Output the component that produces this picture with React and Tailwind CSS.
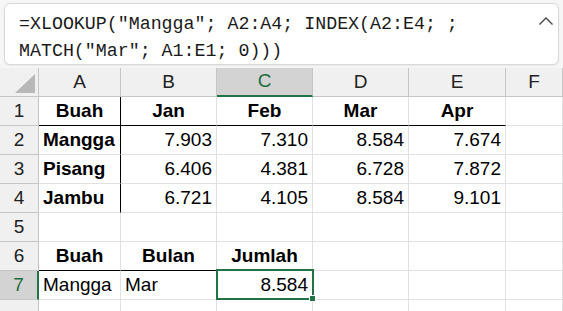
import React from "react";

const cols = ["A", "B", "C", "D", "E", "F"];

// each row: array of [text, align, bold]
const rows = [
  [["Buah", "c", 1], ["Jan", "c", 1], ["Feb", "c", 1], ["Mar", "c", 1], ["Apr", "c", 1]],
  [["Mangga", "l", 1], ["7.903", "r"], ["7.310", "r"], ["8.584", "r"], ["7.674", "r"]],
  [["Pisang", "l", 1], ["6.406", "r"], ["4.381", "r"], ["6.728", "r"], ["7.872", "r"]],
  [["Jambu", "l", 1], ["6.721", "r"], ["4.105", "r"], ["8.584", "r"], ["9.101", "r"]],
  [],
  [["Buah", "c", 1], ["Bulan", "c", 1], ["Jumlah", "c", 1]],
  [["Mangga", "l"], ["Mar", "l"], ["8.584", "r"]],
  [],
];

const alignClass = { l: "justify-start pl-[4px]", c: "justify-center", r: "justify-end pr-[4px]" };

function cellBorders(r, c) {
  // r: 1-based row, c: 0-based col
  const bottomBlack = (r === 1 && c <= 4) || (r === 6 && c <= 2);
  const rightBlack = c === 0 && r >= 1 && r <= 4;
  if (bottomBlack && rightBlack) return "border-r border-b border-r-black border-b-black";
  if (bottomBlack) return "border-r border-b border-r-[#e1e1e1] border-b-black";
  if (rightBlack) return "border-r border-b border-r-black border-b-[#e1e1e1]";
  return "border-r border-b border-[#e1e1e1]";
}

function Cell({ r, c, data }) {
  const [text, align, bold] = data || [];
  const selected = r === 7 && c === 2;
  return (
    <div
      className={`relative h-[29px] flex items-center ${alignClass[align || "l"]} ${cellBorders(r, c)} ${
        bold ? "font-bold" : ""
      } text-[19px] text-black whitespace-nowrap`}
    >
      {text}
      {selected && (
        <div className="absolute z-10 -left-px -top-[2px] -right-[2px] -bottom-px border-2 border-[#217346]">
          <div className="absolute -right-[4px] -bottom-[4px] w-[7px] h-[7px] bg-[#217346] border border-white" />
        </div>
      )}
    </div>
  );
}

export default function App() {
  return (
    <div className="w-[563px] h-[311px] overflow-hidden bg-white" style={{ fontFamily: "'Liberation Sans', Arial, sans-serif" }}>
      <div className="bg-[#f6f6f6] px-[4px] pt-[3px] pb-[3px]">
        <div className="relative h-[62px] rounded-[6px] border border-[#d8d8d8] bg-white pl-[14px] pt-[7px] shadow-[0_1px_2px_rgba(0,0,0,0.06)]">
          <div
            className="text-[18.3px] leading-[27px] text-[#1a1a1a] whitespace-pre"
            style={{ fontFamily: "'Liberation Mono', 'DejaVu Sans Mono', monospace" }}
          >
            {'=XLOOKUP("Mangga"; A2:A4; INDEX(A2:E4; ;\nMATCH("Mar"; A1:E1; 0)))'}
          </div>
          <svg className="absolute right-[4px] top-[12px]" width="16" height="10" viewBox="0 0 16 10">
            <path d="M1.5 8.5 L8 2 L14.5 8.5" fill="none" stroke="#444" strokeWidth="1.3" />
          </svg>
        </div>
      </div>
      <div className="grid grid-cols-[39px_82px_96px_96px_96px_97px_1fr]">
        <div className="h-[29px] bg-[#f0f0f0] border-r border-b border-[#c6c6c6] flex items-end justify-end pr-[3px] pb-[3px]">
          <div className="w-[20px] h-[19px] bg-[#b8b8b8] [clip-path:polygon(100%_0,100%_100%,0_100%)]" />
        </div>
        {cols.map((l) =>
          l === "C" ? (
            <div
              key={l}
              className="h-[29px] bg-[#d3d3d3] border-r border-[#c6c6c6] border-b-2 border-b-[#217346] flex items-center justify-center text-[19px] text-[#1d6b3e]"
            >
              {l}
            </div>
          ) : (
            <div
              key={l}
              className="h-[29px] bg-[#f0f0f0] border-r border-b border-[#c6c6c6] flex items-center justify-center text-[19px] text-[#222]"
            >
              {l}
            </div>
          )
        )}
        {rows.map((row, i) => {
          const r = i + 1;
          return (
            <React.Fragment key={r}>
              {r === 7 ? (
                <div className="h-[29px] bg-[#d3d3d3] border-r-2 border-r-[#217346] border-b border-b-[#c6c6c6] flex items-center justify-center text-[19px] text-[#1d6b3e]">
                  {r}
                </div>
              ) : (
                <div className="h-[29px] bg-[#f0f0f0] border-r border-b border-[#c6c6c6] flex items-center justify-center text-[19px] text-[#222]">
                  {r < 8 ? r : ""}
                </div>
              )}
              {[0, 1, 2, 3, 4, 5].map((c) => (
                <Cell key={c} r={r} c={c} data={row[c]} />
              ))}
            </React.Fragment>
          );
        })}
      </div>
    </div>
  );
}
